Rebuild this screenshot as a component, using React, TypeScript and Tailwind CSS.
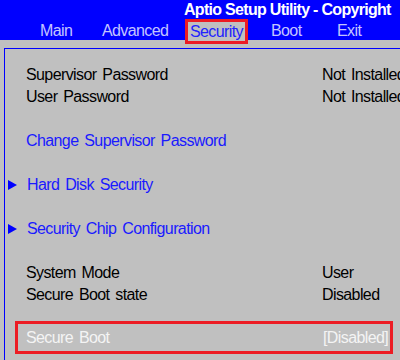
import React from "react";

const font = { fontFamily: '"Liberation Sans", Arial, sans-serif' };

function Row({ label, value, color = "text-black" }: { label: string; value?: string; color?: string }) {
  return (
    <div className={`flex h-[22px] items-center ${color}`}>
      <span className="w-[317px] shrink-0 pl-[21px] whitespace-nowrap">{label}</span>
      {value && <span className="whitespace-nowrap">{value}</span>}
    </div>
  );
}

function Sub({ label }: { label: string }) {
  return (
    <div className="flex h-[22px] items-center text-[#1a1aff]">
      <svg width="9" height="10" viewBox="0 0 9 10" className="ml-[3px] mr-[10px] shrink-0">
        <polygon points="0,0 9,5 0,10" fill="#0000ff" />
      </svg>
      <span className="whitespace-nowrap">{label}</span>
    </div>
  );
}

function Blank() {
  return <div className="h-[22px]" />;
}

export default function App() {
  return (
    <div
      className="w-[400px] h-[360px] overflow-hidden bg-[#c0c0c0] text-[16px] leading-none tracking-[-0.6px] [word-spacing:2px]"
      style={font}
    >
      <div className="h-[40px] bg-[#0000ff] relative">
        <div className="pl-[184px] pt-[2px] h-[19px] text-white font-bold text-[16px] tracking-[-0.7px] [word-spacing:0px] whitespace-nowrap">
          Aptio Setup Utility - Copyright
        </div>
        <div className="flex items-start h-[21px] text-[#c4c4ff]">
          <span className="ml-[40px] w-[62px] mt-[4px] shrink-0">Main</span>
          <span className="w-[83px] mt-[4px] shrink-0">Advanced</span>
          <span className="w-[63px] h-[25px] shrink-0 border-[3px] border-[#ec1c24] bg-[#c0c0c0] text-[#2323ff] flex items-center justify-center">
            Security
          </span>
          <span className="ml-[23px] w-[66px] mt-[4px] shrink-0">Boot</span>
          <span className="mt-[4px] shrink-0">Exit</span>
        </div>
      </div>
      <div className="mt-[8px] ml-[4px] h-[312px] border-l border-t border-[#0000ff] pt-[15px]">
        <Row label="Supervisor Password" value="Not Installed" />
        <Row label="User Password" value="Not Installed" />
        <Blank />
        <Row label="Change Supervisor Password" color="text-[#1a1aff]" />
        <Blank />
        <Sub label="Hard Disk Security" />
        <Blank />
        <Sub label="Security Chip Configuration" />
        <Blank />
        <Row label="System Mode" value="User" />
        <Row label="Secure Boot state" value="Disabled" />
        <div className="mt-[15px] ml-[10px] w-[378px] h-[33px] border-[3px] border-[#ec1c24] flex items-center text-[#f4f4f4]">
          <span className="w-[305px] shrink-0 pl-[8px] whitespace-nowrap">Secure Boot</span>
          <span className="whitespace-nowrap">[Disabled]</span>
        </div>
      </div>
    </div>
  );
}
